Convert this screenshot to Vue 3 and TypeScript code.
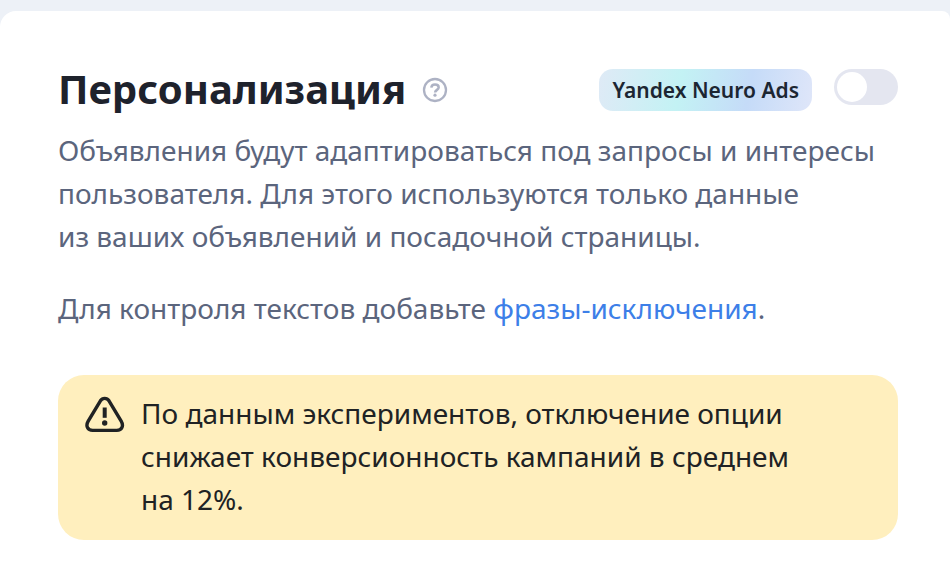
<script setup lang="ts">
import { ref } from 'vue'

const enabled = ref(false)
</script>

<template>
  <main class="page">
    <section class="card">
      <header class="head">
        <h1 id="title" class="title">Персонализация</h1>
        <button class="help" type="button" aria-label="Справка">
          <svg viewBox="0 0 26 26" width="26" height="26" fill="none" stroke="currentColor" stroke-width="2.3">
            <circle cx="13" cy="13" r="11" />
            <path d="M9.3 10.7C9.5 8.7 11 7.6 13 7.6c2.200 0 3.700 1.200 3.700 2.900 0 2.300-3.600 2.500-3.600 5" stroke-width="2.500" />
            <circle cx="13" cy="18.200" r="1.600" fill="currentColor" stroke="none" />
          </svg>
        </button>
        <div class="controls">
          <span class="badge">Yandex Neuro Ads</span>
          <input v-model="enabled" class="switch" type="checkbox" role="switch" aria-labelledby="title" />
        </div>
      </header>
      <p class="text">
        Объявления будут адаптироваться под запросы и интересы<br />
        пользователя. Для этого используются только данные<br />
        из ваших объявлений и посадочной страницы.
      </p>
      <p class="text control">Для контроля текстов добавьте <a href="#">фразы-исключения</a>.</p>
      <aside class="notice">
        <svg class="warn" viewBox="0 0 40 38" width="40" height="38" fill="none" stroke="currentColor" stroke-width="3.400" stroke-linejoin="round">
          <path d="M15.400 4.800C17.500 1.600 21.900 1.600 24 4.800L36.200 25.200C39 30 36.800 34.400 31.800 34.400H7.600C2.600 34.400.4 30 3.200 25.200Z" />
          <path d="M19.700 11.500v10.300" stroke-width="4" />
          <circle cx="19.700" cy="27" r="2.700" fill="currentColor" stroke="none" />
        </svg>
        <p class="notice-text">
          По данным экспериментов, отключение опции<br />
          снижает конверсионность кампаний в среднем<br />
          на 12%.
        </p>
      </aside>
    </section>
  </main>
</template>

<style>
body {
  background: #edf1f7;
}
</style>

<style scoped>
.page {
  padding-top: 11px;
  font-family: "Noto Sans", sans-serif;
}
.card {
  box-sizing: border-box;
  min-height: calc(100vh - 11px);
  padding: 48px 52px 48px 58px;
  background: #fff;
  border-radius: 16px 8px 0 0;
}
.head {
  display: flex;
  align-items: center;
  min-height: 62px;
}
.title {
  margin: 0;
  padding-bottom: 2px;
  font-size: 40px;
  line-height: 60px;
  font-weight: 700;
  color: #1e222c;
}
.help {
  display: flex;
  margin-left: 16px;
  padding: 0;
  border: 0;
  background: none;
  color: #adb2c4;
}
.controls {
  display: flex;
  align-items: flex-start;
  gap: 22px;
  margin-left: auto;
}
.badge {
  padding: 0 13px;
  border-radius: 14px;
  font-size: 21px;
  line-height: 42px;
  font-weight: 600;
  color: #1c2632;
  background: linear-gradient(100deg, #dfeaf6, #c3f2f4 38%, #c5dbf8 70%, #dfe6f9);
}
.switch {
  appearance: none;
  width: 64px;
  height: 36px;
  margin: 0;
  padding: 3px;
  border-radius: 18px;
  background: #e4e6f0;
}
.switch::before {
  content: "";
  display: block;
  width: 30px;
  height: 30px;
  border-radius: 50%;
  background: #fff;
}
.switch:checked {
  background: #3d7fe8;
}
.switch:checked::before {
  margin-left: 28px;
}
.text {
  margin: 8px 0 0;
  font-size: 28px;
  line-height: 43px;
  color: #5b657d;
  white-space: nowrap;
}
.control {
  margin-top: 29px;
}
.text a {
  color: #3d7fe8;
  text-decoration: none;
}
.notice {
  display: flex;
  gap: 16px;
  margin-top: 45px;
  padding: 17px 27px 19px;
  border-radius: 26px;
  background: #ffefbe;
  color: #202224;
}
.warn {
  flex: none;
  margin-top: 4px;
}
.notice-text {
  margin: 0;
  font-size: 28px;
  line-height: 43px;
  white-space: nowrap;
}
</style>
